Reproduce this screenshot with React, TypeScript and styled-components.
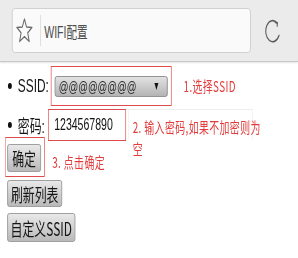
import React from "react";
import styled, { createGlobalStyle } from "styled-components";

// the reference is a phone screenshot squeezed sideways, so the page is laid
// out at its natural width and narrowed once as a whole
const SQUEEZE = 0.66;

const Global = createGlobalStyle`
  html, body {
    margin: 0;
    padding: 0;
    background: #fff;
    overflow: hidden;
  }
`;

const Page = styled.div`
  width: ${Math.round(298 / SQUEEZE)}px;
  height: 258px;
  transform: scaleX(${SQUEEZE});
  transform-origin: 0 0;
  font-family: "Liberation Sans", "Noto Sans CJK SC", sans-serif;
  color: #151515;
`;

const TopBar = styled.div`
  height: 62px;
  box-sizing: border-box;
  display: flex;
  align-items: flex-start;
  gap: 20px;
  padding: 8px 0 0 18px;
  background: #ebebeb;
  border-bottom: 1px solid #c8c8c8;
  box-shadow: 0 1px 2px rgba(0, 0, 0, 0.12);
`;

const Address = styled.div`
  width: 362px;
  height: 45px;
  box-sizing: border-box;
  display: flex;
  align-items: center;
  padding-left: 5px;
  background: #fafafa;
  border: 1px solid #c9c9c9;
  border-radius: 5px;
`;

const Divider = styled.span`
  width: 1px;
  height: 31px;
  margin: 0 5px 0 11px;
  background: #d4d4d4;
`;

const Title = styled.span`
  font-size: 16px;
  color: #4c4c4c;
`;

const Reload = styled.svg`
  margin-top: 10px;
  flex: none;
`;

const Content = styled.div`
  padding-left: 8px;
`;

const Row = styled.div<{ $top: number; $align?: string }>`
  display: flex;
  align-items: ${(p) => p.$align || "center"};
  margin-top: ${(p) => p.$top}px;
`;

const Dot = styled.span`
  width: 6px;
  height: 6px;
  margin: 0 9px 0 4px;
  border-radius: 50%;
  background: #111;
  flex: none;
`;

const Label = styled.span<{ $gap: number }>`
  font-size: 18px;
  margin-right: ${(p) => p.$gap}px;
  white-space: nowrap;
`;

const Mark = styled.div<{ $pad: string }>`
  display: flex;
  padding: ${(p) => p.$pad};
  border: 1px solid #df4a4a;
  flex: none;
`;

const Select = styled.div`
  width: 171px;
  height: 21px;
  box-sizing: border-box;
  display: flex;
  align-items: center;
  justify-content: space-between;
  padding: 0 13px 0 5px;
  border: 1px solid #7d7d7d;
  border-radius: 3px;
  background: linear-gradient(#e2e2e2, #b4b4b4);
  font-size: 14.5px;
  color: #2a2a2a;
`;

const Caret = styled.span`
  width: 0;
  height: 0;
  border-left: 3.5px solid transparent;
  border-right: 3.5px solid transparent;
  border-top: 7px solid #111;
`;

const Field = styled.div`
  width: 118px;
  height: 32px;
  box-sizing: border-box;
  display: flex;
  align-items: center;
  padding-left: 8px;
  border: 1px solid #df4a4a;
  background: #fff;
  font-size: 16px;
  color: #111;
`;

const Note = styled.span<{ $left: number; $pt?: number }>`
  margin-left: ${(p) => p.$left}px;
  padding-top: ${(p) => p.$pt || 0}px;
  font-family: "Noto Sans CJK SC", sans-serif;
  font-size: 15px;
  letter-spacing: 0.6px;
  line-height: 22px;
  color: #e33b3b;
  white-space: nowrap;
`;

const NoteBox = styled.div`
  width: 189px;
  height: 30px;
  box-sizing: border-box;
  margin-left: 3px;
  padding: 6px 0 0 6px;
  border: 1px solid #eeeeee;
  border-bottom: none;
`;

const Button = styled.button<{ $w: number; $h: number; $top?: number; $left?: number }>`
  width: ${(p) => p.$w}px;
  height: ${(p) => p.$h}px;
  margin: ${(p) => p.$top ?? 0}px 0 0 ${(p) => p.$left ?? 3}px;
  padding: 0;
  display: flex;
  align-items: center;
  justify-content: center;
  border: 1px solid #8c8c8c;
  border-radius: 3px;
  background: linear-gradient(#e9e9e9, #b9b9b9);
  font-family: "Noto Sans CJK SC", sans-serif;
  font-size: 18px;
  color: #151515;
  box-sizing: border-box;
`;

const Column = styled.div`
  display: flex;
  flex-direction: column;
  align-items: flex-start;
`;

const StarIcon = () => (
  <svg width="26" height="27" viewBox="0 0 26 27" fill="none">
    <polygon
      points="13,2 16.2,10 24.5,10.4 18,15.8 20.3,24.5 13,19.6 5.7,24.5 8,15.8 1.5,10.4 9.8,10"
      stroke="#6a6a6a"
      strokeWidth="1.5"
      strokeLinejoin="round"
    />
  </svg>
);

const ReloadIcon = () => (
  <Reload width="27" height="25" viewBox="0 0 27 25" fill="none">
    <path
      d="M19.9 5.1 A10.5 10.5 0 1 0 22.8 17.4"
      stroke="#5c5c5c"
      strokeWidth="1.6"
      strokeLinecap="round"
    />
    <path
      d="M16.8 4.4 L20.3 4.7 L19.9 8.2"
      stroke="#5c5c5c"
      strokeWidth="1.6"
      strokeLinecap="round"
      strokeLinejoin="round"
    />
  </Reload>
);

export default function App() {
  return (
    <Page>
      <Global />
      <TopBar>
        <Address>
          <StarIcon />
          <Divider />
          <Title>WIFI配置</Title>
        </Address>
        <ReloadIcon />
      </TopBar>
      <Content>
        <Row $top={4}>
          <Dot />
          <Label $gap={3}>SSID:</Label>
          <Mark $pad="9px 5px 8px 5px">
            <Select>
              <span>@@@@@@@@</span>
              <Caret />
            </Select>
          </Mark>
          <Note $left={18}>1.选择SSID</Note>
        </Row>
        <Row $top={3} $align="flex-start">
          <Row $top={0}>
            <Dot />
            <Label $gap={5}>密码:</Label>
            <Field>1234567890</Field>
          </Row>
          <NoteBox>
            <Note $left={0}>
              2. 输入密码,如果不加密则为
              <br />空
            </Note>
          </NoteBox>
        </Row>
        <Row $top={-4}>
          <Mark $pad="6px 5px 4px 2px">
            <Button $w={51} $h={28} $left={0}>
              确定
            </Button>
          </Mark>
          <Note $left={11} $pt={10}>
            3. 点击确定
          </Note>
        </Row>
        <Column>
          <Button $w={83} $h={27} $top={3}>
            刷新列表
          </Button>
          <Button $w={103} $h={29} $top={6}>
            自定义SSID
          </Button>
        </Column>
      </Content>
    </Page>
  );
}
